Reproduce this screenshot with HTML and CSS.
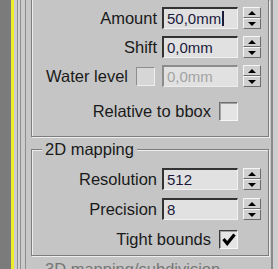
FILE: index.html
```html
<!DOCTYPE html>
<html lang="en">
<head>
<meta charset="utf-8">
<title>Mapping settings</title>
<link rel="stylesheet" href="styles.css">
</head>
<body>
<div class="app">
  <div class="rail"></div>
  <div class="panel">
    <div class="group group--top">
      <div class="row">
        <span class="label">Amount</span>
        <div class="field"><span class="value">50,0mm</span><span class="caret"></span></div>
        <div class="spinner"><span class="spin spin--up"></span><span class="spin spin--down"></span></div>
      </div>
      <div class="row">
        <span class="label">Shift</span>
        <div class="field"><span class="value">0,0mm</span></div>
        <div class="spinner"><span class="spin spin--up"></span><span class="spin spin--down"></span></div>
      </div>
      <div class="row row--water">
        <span class="label">Water level</span>
        <span class="check check--disabled"></span>
        <div class="field field--disabled"><span class="value">0,0mm</span></div>
        <div class="spinner"><span class="spin spin--up"></span><span class="spin spin--down"></span></div>
      </div>
      <div class="row row--check row--spaced">
        <span class="label">Relative to bbox</span>
        <span class="check"></span>
      </div>
    </div>
    <fieldset class="group group--2d">
      <legend class="legend">2D mapping</legend>
      <div class="row">
        <span class="label">Resolution</span>
        <div class="field"><span class="value">512</span></div>
        <div class="spinner"><span class="spin spin--up"></span><span class="spin spin--down"></span></div>
      </div>
      <div class="row">
        <span class="label">Precision</span>
        <div class="field"><span class="value">8</span></div>
        <div class="spinner"><span class="spin spin--up"></span><span class="spin spin--down"></span></div>
      </div>
      <div class="row row--check">
        <span class="label">Tight bounds</span>
        <span class="check check--on"><svg width="14" height="13" viewBox="0 0 14 13"><path d="M1.5 6 L5.2 10.5 L12.5 1.5" fill="none" stroke="#000" stroke-width="3.2"/></svg></span>
      </div>
    </fieldset>
    <fieldset class="group group--3d">
      <legend class="legend legend--dim">3D mapping/subdivision</legend>
    </fieldset>
  </div>
  <div class="edge"></div>
</div>
</body>
</html>
```
FILE: styles.css
```css
* { box-sizing: border-box; }
html, body { margin: 0; padding: 0; }
body {
  width: 278px;
  height: 269px;
  overflow: hidden;
  background: #c5c5c5;
  font-family: "Liberation Sans", Arial, sans-serif;
  font-size: 16.5px;
  color: #1a1a1a;
}
.app { display: flex; height: 269px; overflow: hidden; }
.rail {
  flex: 0 0 31px;
  background: linear-gradient(to right,
    #7b7b7b 0 11px, #ecec2a 11px 14px, #cdcdcd 14px 17px, #8e8e8e 17px 18px,
    #d3d3d3 18px 20px, #8e8e8e 20px 21px, #cbcbcb 21px 25px, #8e8e8e 25px 26px,
    #c7c7c7 26px 31px);
}
.panel {
  flex: 1;
  min-width: 0;
  display: flex;
  flex-direction: column;
  padding-right: 1px;
}
.edge {
  flex: 0 0 8px;
  background: linear-gradient(to right, #c5c5c5 0 1px, #8a8a8a 1px 3px, #cecece 3px 8px);
}
.group {
  margin: 0;
  min-width: 0;
  flex-shrink: 0;
  border: 1px solid #7d7d7d;
  box-shadow: inset 1px 1px 0 #eeeeee, 1px 1px 0 #eeeeee;
  display: flex;
  flex-direction: column;
}
.group--top {
  border-top: 0;
  box-shadow: inset 1px 0 0 #eeeeee, 1px 1px 0 #eeeeee;
  padding: 7px 7px 14px 0;
  gap: 7px;
}
.group--2d { margin-top: 4px; padding: 11px 7px 5px 0; gap: 8px; }
.group--3d { margin-top: 5px; padding: 0; min-height: 40px; }
.legend {
  margin-left: 10px;
  padding: 0 3px;
  line-height: 16px;
  font-size: 16.5px;
  background: #c5c5c5;
  color: #1a1a1a;
}
.legend--dim { color: #767676; }
.row {
  display: flex;
  justify-content: flex-end;
  align-items: center;
  gap: 5px;
  height: 22px;
  flex-shrink: 0;
}
.row--check { padding-right: 23px; gap: 8px; }
.row--spaced { margin-top: 6px; }
.row--water .check { margin: 0 2px 0 3px; }
.label { white-space: nowrap; }
.field {
  width: 76px;
  height: 22px;
  border-style: solid;
  border-width: 2px 1px 1px 2px;
  border-color: #333333 #f2f2f2 #f2f2f2 #333333;
  background: #e1e1e1;
  display: flex;
  align-items: center;
  padding-left: 3px;
  font-size: 15px;
  color: #1b1b3c;
}
.field--disabled {
  border-color: #8c8c8c #ececec #ececec #8c8c8c;
  color: #a3a3a3;
}
.caret { width: 2px; height: 15px; background: #1b1b3c; margin-left: 1px; }
.spinner { width: 18px; height: 22px; display: flex; flex-direction: column; }
.spin {
  flex: 1;
  display: flex;
  align-items: center;
  justify-content: center;
  background: #d0d0d0;
  border: 1px solid;
  border-color: #f6f6f6 #6c6c6c #6c6c6c #f6f6f6;
}
.spin--up::before {
  content: "";
  border-left: 4px solid transparent;
  border-right: 4px solid transparent;
  border-bottom: 4px solid #000;
}
.spin--down::before {
  content: "";
  border-left: 4px solid transparent;
  border-right: 4px solid transparent;
  border-top: 4px solid #000;
}
.check {
  width: 19px;
  height: 19px;
  border: 1px solid;
  border-color: #6f6f6f #f7f7f7 #f7f7f7 #6f6f6f;
  box-shadow: inset 1px 1px 0 #a0a0a0;
  background: #e4e4e4;
  display: flex;
  align-items: center;
  justify-content: center;
}
.check--disabled {
  border-color: #8e8e8e #eeeeee #eeeeee #8e8e8e;
  box-shadow: none;
  background: #d6d6d6;
}
.check--on { border-color: #3a3a3a #f7f7f7 #f7f7f7 #3a3a3a; }
```
